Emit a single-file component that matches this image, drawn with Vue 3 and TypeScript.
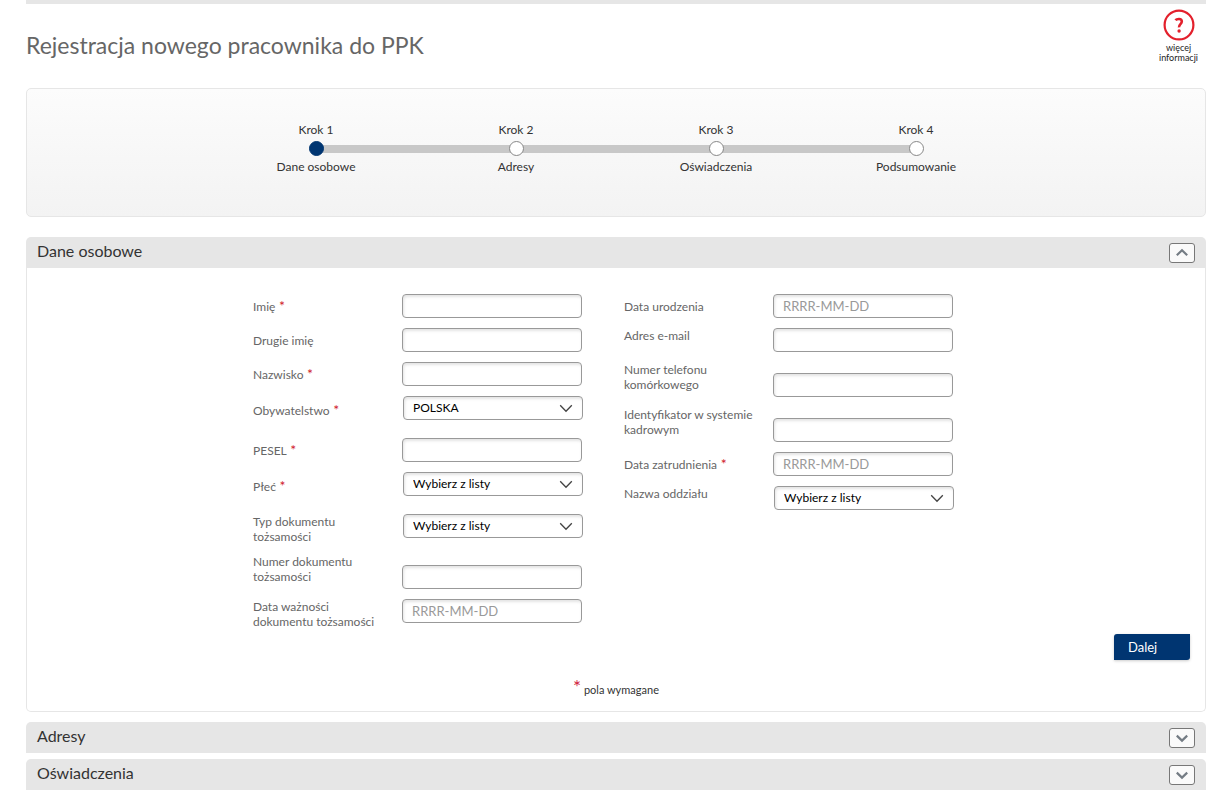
<script setup lang="ts">
import { ref } from 'vue'

interface Field {
  id: string
  label: string
  required?: boolean
  placeholder?: string
  options?: string[]
  layout?: string
}

const steps = ['Dane osobowe', 'Adresy', 'Oświadczenia', 'Podsumowanie']
const currentStep = ref(0)

const columns: Field[][] = [
  [
    { id: 'first-name', label: 'Imię', required: true },
    { id: 'second-name', label: 'Drugie imię' },
    { id: 'surname', label: 'Nazwisko', required: true },
    { id: 'citizenship', label: 'Obywatelstwo', required: true, options: ['POLSKA'], layout: 'roomy' },
    { id: 'pesel', label: 'PESEL', required: true },
    { id: 'gender', label: 'Płeć', required: true, options: ['Wybierz z listy'], layout: 'roomy' },
    { id: 'doc-type', label: 'Typ dokumentu tożsamości', options: ['Wybierz z listy'] },
    { id: 'doc-number', label: 'Numer dokumentu tożsamości', layout: 'low' },
    { id: 'doc-expiry', label: 'Data ważności dokumentu tożsamości', placeholder: 'RRRR-MM-DD' },
  ],
  [
    { id: 'birth-date', label: 'Data urodzenia', placeholder: 'RRRR-MM-DD' },
    { id: 'email', label: 'Adres e-mail', layout: 'high' },
    { id: 'phone', label: 'Numer telefonu komórkowego', layout: 'low' },
    { id: 'hr-id', label: 'Identyfikator w systemie kadrowym', layout: 'low' },
    { id: 'hire-date', label: 'Data zatrudnienia', required: true, placeholder: 'RRRR-MM-DD' },
    { id: 'branch', label: 'Nazwa oddziału', options: ['Wybierz z listy'], layout: 'high' },
  ],
]
</script>

<template>
  <main class="page">
    <header class="page-header">
      <h1>Rejestracja nowego pracownika do PPK</h1>
      <a class="help" href="#">
        <svg width="32" height="32" viewBox="0 0 32 32" aria-hidden="true">
          <circle cx="16" cy="16" r="14.4" fill="none" stroke="#e3202c" stroke-width="2.2" />
          <path d="M12.4 11.2C13.6 9.9 18.8 8.9 18.8 12.5C18.8 15.2 15.8 15.2 16 18.4" fill="none" stroke="#e3202c" stroke-width="2.6" />
          <circle cx="16.1" cy="22" r="1.7" fill="#e3202c" />
        </svg>
        <span>więcej</span>
        <span>informacji</span>
      </a>
    </header>

    <section class="stepper">
      <ol>
        <li v-for="(step, i) in steps" :key="step" :class="{ active: i === currentStep }">
          <span>Krok {{ i + 1 }}</span>
          <i class="dot"></i>
          <span>{{ step }}</span>
        </li>
      </ol>
    </section>

    <section class="panel">
      <div class="bar">
        <h2>Dane osobowe</h2>
        <button type="button" class="toggle" aria-label="Zwiń">
          <svg width="14" height="10" viewBox="0 0 14 10"><path d="M1.8 7.2L7 2.2L12.2 7.2" /></svg>
        </button>
      </div>
      <form class="body" @submit.prevent>
        <div class="columns">
          <div v-for="(fields, c) in columns" :key="c" class="column">
            <div v-for="f in fields" :key="f.id" class="field" :class="f.layout">
              <label :for="f.id">{{ f.label }}<b v-if="f.required"> *</b></label>
              <div v-if="f.options" class="select">
                <select :id="f.id">
                  <option v-for="o in f.options" :key="o">{{ o }}</option>
                </select>
                <svg width="14" height="9" viewBox="0 0 14 9"><path d="M1.2 1.2L7 7.2L12.8 1.2" /></svg>
              </div>
              <input v-else :id="f.id" type="text" :placeholder="f.placeholder" />
            </div>
          </div>
        </div>
        <div class="actions"><button type="submit" class="next">Dalej</button></div>
        <p class="note"><b>*</b> pola wymagane</p>
      </form>
    </section>

    <section v-for="name in ['Adresy', 'Oświadczenia']" :key="name" class="bar closed">
      <h2>{{ name }}</h2>
      <button type="button" class="toggle" aria-label="Rozwiń">
        <svg width="14" height="10" viewBox="0 0 14 10"><path d="M1.8 2.6L7 7.6L12.2 2.6" /></svg>
      </button>
    </section>
  </main>
</template>

<style>
body {
  margin: 0;
  background: #fff;
}
</style>

<style scoped>
* {
  box-sizing: border-box;
}
.page {
  margin: 0 21px 0 26px;
  border-top: 4px solid #e6e6e6;
  font-family: Lato, "Open Sans", sans-serif;
  font-size: 12px;
  line-height: 15px;
  color: #333;
}
.page-header {
  display: flex;
  justify-content: space-between;
  align-items: center;
  height: 84px;
}
h1 {
  margin: 0 0 2px;
  font-size: 23px;
  line-height: 30px;
  font-weight: 400;
  color: #666;
}
.help {
  display: flex;
  flex-direction: column;
  align-items: center;
  align-self: flex-start;
  margin: 5px 8px 0 0;
  font-size: 9px;
  line-height: 10px;
  color: #222;
  text-decoration: none;
}
.help svg {
  margin-bottom: 2px;
}
.stepper {
  height: 129px;
  padding-top: 33px;
  border: 1px solid #e6e6e6;
  border-radius: 5px;
  background: linear-gradient(#fcfcfc, #f3f3f3);
}
.stepper ol {
  display: grid;
  grid-template-columns: repeat(4, 1fr);
  max-width: 800px;
  margin: 0 auto;
  padding: 0;
  list-style: none;
}
.stepper li {
  display: flex;
  flex-direction: column;
  align-items: center;
  position: relative;
}
.stepper li + li::before {
  content: "";
  position: absolute;
  left: -50%;
  top: 23px;
  width: 100%;
  height: 8px;
  background: #c8c8c8;
}
.dot {
  position: relative;
  z-index: 1;
  width: 15px;
  height: 15px;
  margin: 4px 0 3px;
  border: 1px solid #888;
  border-radius: 50%;
  background: #fff;
}
.active .dot {
  border-color: #003571;
  background: #003571;
}
.panel {
  margin: 20px 0 10px;
}
.bar {
  display: flex;
  align-items: center;
  justify-content: space-between;
  height: 31px;
  padding: 0 11px;
  border-radius: 5px 5px 0 0;
  background: #e6e6e6;
}
.closed {
  margin-bottom: 6px;
}
h2 {
  margin: 0 0 4px;
  font-size: 16px;
  line-height: 20px;
  font-weight: 400;
  color: #333;
}
.toggle {
  display: grid;
  place-items: center;
  width: 26px;
  height: 20px;
  margin-top: 1px;
  padding: 0;
  border: 1px solid #777;
  border-radius: 3px;
  background: #fafafa;
}
.toggle path {
  fill: none;
  stroke: #747c84;
  stroke-width: 2.2;
}
.body {
  padding: 26px 15px 14px;
  border: 1px solid #e6e6e6;
  border-top: 0;
  border-radius: 0 0 5px 5px;
}
.columns {
  display: flex;
  gap: 42px;
  max-width: 726px;
  margin: 0 auto;
}
.column {
  display: flex;
  flex-direction: column;
  gap: 10px;
}
.field {
  display: grid;
  grid-template-columns: 149px 180px;
  align-items: start;
}
.field label {
  align-self: center;
  padding-right: 10px;
  color: #666;
}
.field b {
  font-size: 14px;
  font-weight: 400;
  line-height: 12px;
  color: #d0202c;
}
.roomy {
  min-height: 32px;
}
.roomy label {
  padding-bottom: 3px;
}
.low {
  min-height: 35px;
}
.low input {
  align-self: end;
}
.low label,
.high label {
  align-self: start;
}
input,
select {
  width: 100%;
  height: 24px;
  margin: 0;
  padding: 0 9px;
  border: 1px solid #999;
  border-radius: 4px;
  background: #fff;
  box-shadow: inset 1px 2px 3px #e4e4e4;
  font: inherit;
  color: #000;
}
input {
  font-size: 13px;
}
input::placeholder {
  color: #999;
  opacity: 1;
}
.select {
  position: relative;
  height: 24px;
  margin: 0 -1px 0 1px;
}
select {
  padding-bottom: 2px;
  appearance: none;
}
.select svg {
  position: absolute;
  right: 10px;
  top: 8px;
  pointer-events: none;
}
.select path {
  fill: none;
  stroke: #444;
  stroke-width: 1.3;
}
.actions {
  display: flex;
  justify-content: flex-end;
  margin-top: 5px;
}
.next {
  width: 76px;
  height: 26px;
  padding: 0 14px;
  border: 0;
  border-radius: 3px 0 3px 0;
  background: #003571;
  box-shadow: 0 1px 3px #ccc;
  font: inherit;
  font-size: 13px;
  color: #fff;
  text-align: left;
}
.note {
  margin: 21px 0 0;
  font-size: 11px;
  text-align: center;
}
.note b {
  font-size: 19px;
  font-weight: 400;
  line-height: 12px;
  color: #d0203c;
}
</style>
